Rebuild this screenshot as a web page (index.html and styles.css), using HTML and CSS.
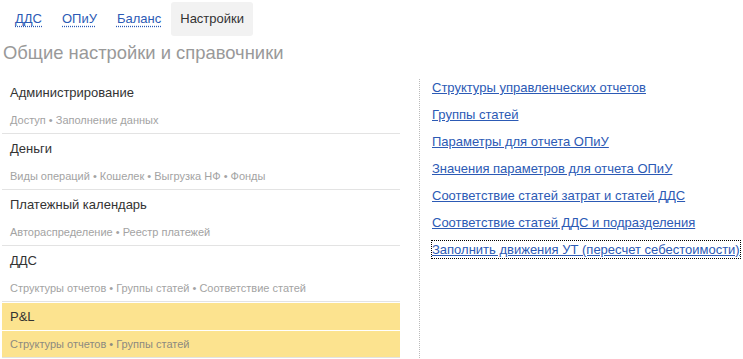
FILE: index.html
```html
<!DOCTYPE html>
<html>
<head>
	<title>Настройки</title>
	<meta charset="utf-8">
	<link rel="stylesheet" href="styles.css">
</head>

<body>
	<div id="tabs">
		<a class="tab" href="#"><span>ДДС</span></a>
		<a class="tab" href="#"><span>ОПиУ</span></a>
		<a class="tab" href="#"><span>Баланс</span></a>
		<a class="tab active" href="#"><span>Настройки</span></a>
	</div>
	<h1 class="page_title">Общие настройки и справочники</h1>
	<div id="content">
		<ul id="sections">
			<li>
				<div class="sec_title">Администрирование</div>
				<div class="sec_sub">Доступ • Заполнение данных</div>
			</li>
			<li>
				<div class="sec_title">Деньги</div>
				<div class="sec_sub">Виды операций • Кошелек • Выгрузка НФ • Фонды</div>
			</li>
			<li>
				<div class="sec_title">Платежный календарь</div>
				<div class="sec_sub">Автораспределение • Реестр платежей</div>
			</li>
			<li>
				<div class="sec_title">ДДС</div>
				<div class="sec_sub">Структуры отчетов • Группы статей • Соответствие статей</div>
			</li>
			<li class="current">
				<div class="sec_title">P&amp;L</div>
				<div class="sec_sub">Структуры отчетов • Группы статей</div>
			</li>
		</ul>
		<ul id="links">
			<li><a href="#">Структуры управленческих отчетов</a></li>
			<li><a href="#">Группы статей</a></li>
			<li><a href="#">Параметры для отчета ОПиУ</a></li>
			<li><a href="#">Значения параметров для отчета ОПиУ</a></li>
			<li><a href="#">Соответствие статей затрат и статей ДДС</a></li>
			<li><a href="#">Соответствие статей ДДС и подразделения</a></li>
			<li><a class="focused" href="#">Заполнить движения УТ (пересчет себестоимости)</a></li>
		</ul>
	</div>
</body>
</html>
```

FILE: styles.css
```css
html, body {
	margin:0;
	padding:0;
	background:#fff;
	font-family:"Liberation Sans", Arial, sans-serif;
	color:#333;
	overflow:hidden;
}
ul {
	list-style:none;
	margin:0;
	padding:0;
}
#tabs {
	display:flex;
	padding:2px 0 0 5px;
}
#tabs .tab {
	display:block;
	height:34px;
	line-height:34px;
	padding:0 10px;
	font-size:13px;
	color:#2c5ab5;
	text-decoration:none;
	border-radius:3px;
}
#tabs .tab span {
	text-decoration:underline dotted;
	text-underline-offset:3px;
}
#tabs .tab.active {
	background-color:#f2f2f2;
	color:#333;
	padding:0 9px;
}
#tabs .tab.active span {
	text-decoration:none;
}
.page_title {
	margin:0;
	padding:6px 0 0 3px;
	height:36px;
	font-size:18.4px;
	font-weight:normal;
	line-height:22px;
	color:#999;
}
#content {
	display:flex;
	align-items:flex-start;
}
#sections {
	width:398px;
	margin-left:2px;
}
#sections li {
	padding-top:1px;
	border-bottom:solid 1px #e3e3e3;
}
#sections .sec_title {
	height:27px;
	line-height:27px;
	padding-left:8px;
	font-size:13px;
	color:#333;
	margin-bottom:1px;
}
#sections .sec_sub {
	height:26px;
	line-height:26px;
	padding-left:8px;
	font-size:11px;
	color:#a3a3a3;
}
#sections li.current .sec_title,
#sections li.current .sec_sub {
	background-color:#fce38f;
}
#sections li.current .sec_sub {
	color:#8c8a80;
}
#links {
	margin-left:19px;
	padding:0 0 0 12px;
	border-left:dotted 1px #bbb;
	height:285px;
	margin-top:1px;
}
#links li {
	height:17px;
	line-height:17px;
	margin-bottom:10px;
}
#links a {
	display:inline-block;
	vertical-align:top;
	line-height:17px;
	font-size:13px;
	color:#2c5ab5;
	text-decoration:underline;
}
#links a.focused {
	outline:dotted 1px #000;
}
```
